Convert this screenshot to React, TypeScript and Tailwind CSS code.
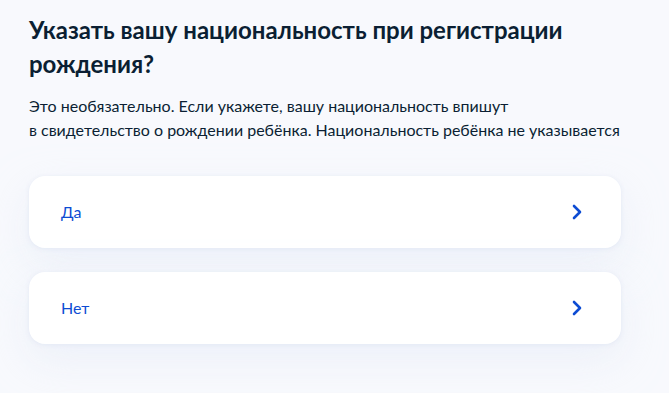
import React from "react";

function Chevron() {
  return (
    <svg width="10" height="16" viewBox="0 0 10 16" fill="none">
      <path d="M2 2 L8 8 L2 14" stroke="#0d4cd3" strokeWidth="2.6" strokeLinecap="round" strokeLinejoin="round" />
    </svg>
  );
}

function Option({ label }: { label: string }) {
  return (
    <div className="flex h-[72px] items-center justify-between rounded-[16px] bg-white pl-[32px] pr-[39px] shadow-[0_1px_4px_rgba(226,232,244,0.9),0_16px_40px_rgba(228,234,246,0.55)]">
      <span className="text-[16px] leading-[24px] text-[#0d4cd3]">{label}</span>
      <Chevron />
    </div>
  );
}

export default function App() {
  return (
    <div className="min-h-screen bg-[#f8f9fd] px-[29px] pt-[13px] pb-[40px]" style={{ fontFamily: "Lato, 'Noto Sans', sans-serif" }}>
      <div className="w-[592px]">
        <h1 className="text-[24px] font-bold leading-[34px] text-[#0b1f33]">
          Указать вашу национальность при регистрации рождения?
        </h1>
        <p className="mt-[13px] text-[16px] leading-[24px] text-[#0b1f33]">
          Это необязательно. Если укажете, вашу национальность впишут
          <br />в свидетельство о рождении ребёнка. Национальность ребёнка не указывается
        </p>
        <div className="mt-[34px] flex flex-col gap-[24px]">
          <Option label="Да" />
          <Option label="Нет" />
        </div>
      </div>
    </div>
  );
}
